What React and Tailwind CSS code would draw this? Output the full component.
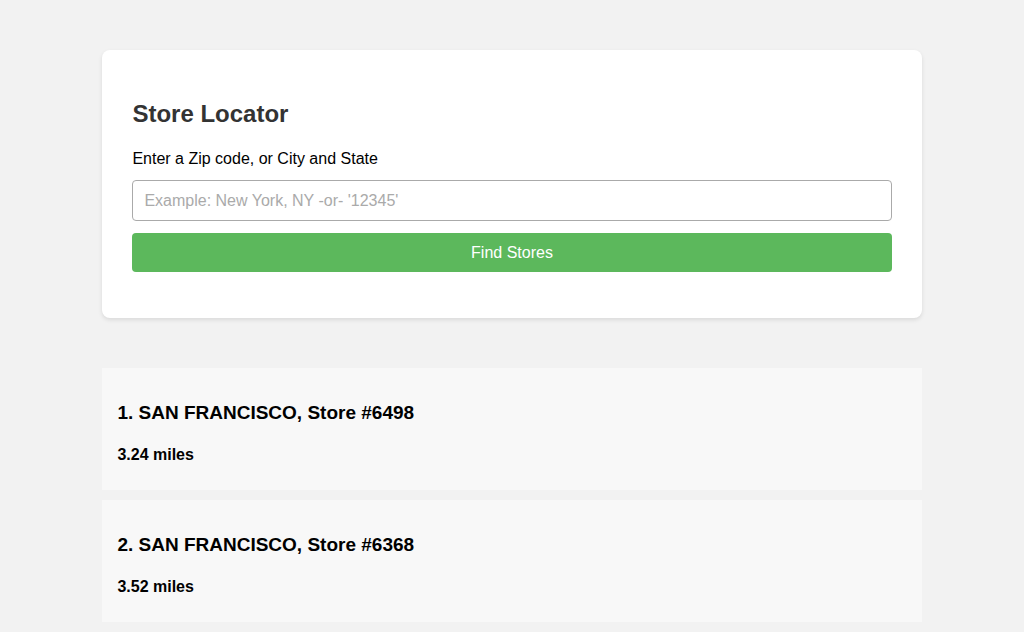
export default function App() {
  const results = [
    { title: "1. SAN FRANCISCO, Store #6498", dist: "3.24 miles" },
    { title: "2. SAN FRANCISCO, Store #6368", dist: "3.52 miles" },
  ];
  return (
    <div
      className="min-h-[632px] w-full bg-[#f2f2f2] pt-[50px]"
      style={{ fontFamily: '"Liberation Sans", Arial, sans-serif' }}
    >
      <div className="mx-auto w-[80%] rounded-[8px] bg-white px-[30px] pt-[50px] pb-[46px] shadow-[0_2px_4px_rgba(0,0,0,0.1)]">
        <h2 className="text-[24px] leading-[28px] font-bold text-[#333]">Store Locator</h2>
        <label className="mt-[22px] block text-[16px] leading-[18px] text-black">
          Enter a Zip code, or City and State
        </label>
        <input
          type="text"
          placeholder="Example: New York, NY -or- '12345'"
          className="mt-[12px] block h-[41px] w-full rounded-[4px] border border-[#aaa] px-[11px] text-[16px] text-black placeholder:text-[#aaa] outline-none"
        />
        <button className="mt-[12px] block h-[39px] w-full rounded-[4px] bg-[#5cb85c] text-[16px] text-white">
          Find Stores
        </button>
      </div>
      <div className="mx-auto mt-[50px] flex w-[80%] flex-col gap-[10px]">
        {results.map((r) => (
          <div key={r.title} className="h-[122px] bg-[#f8f8f8] px-[15px] pt-[34px]">
            <h3 className="text-[19px] leading-[22px] font-bold text-black">{r.title}</h3>
            <p className="mt-[22px] text-[16px] leading-[18px] font-bold text-black">{r.dist}</p>
          </div>
        ))}
      </div>
    </div>
  );
}
